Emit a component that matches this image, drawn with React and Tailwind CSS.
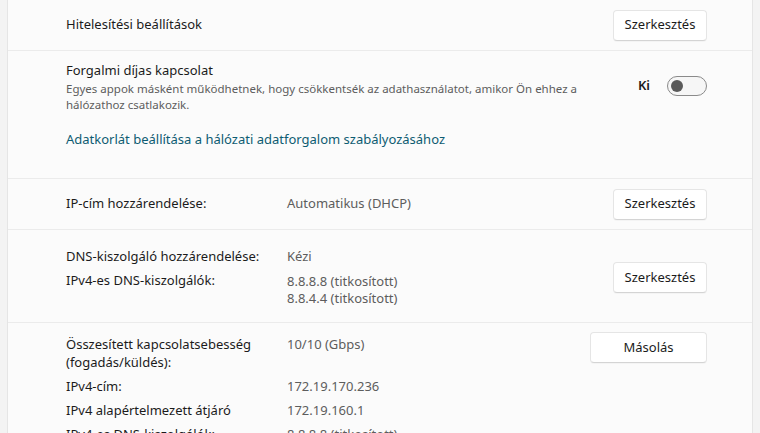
import React, { useState } from "react";

const font = { fontFamily: '"Segoe UI", "Noto Sans", sans-serif' };

const EditButton = ({ children, wide }) => (
  <button
    className={`h-[31px] ${
      wide ? "w-[117px]" : "w-[94px]"
    } shrink-0 rounded-[4px] border border-[#e5e5e5] border-b-[#d4d4d4] bg-white text-[13px] text-[#1b1b1b] shadow-[0_1px_1px_rgba(0,0,0,0.03)]`}
  >
    {children}
  </button>
);

const Toggle = ({ on, onClick }) => (
  <button
    onClick={onClick}
    className="relative h-[20px] w-[40px] rounded-full border border-[#8a8a8a] bg-[#f6f6f6]"
    aria-label="Forgalmi díjas kapcsolat"
  >
    <span
      className={`absolute top-1/2 h-[12px] w-[12px] -translate-y-1/2 rounded-full bg-[#5a5a5a] ${
        on ? "left-[23px]" : "left-[3px]"
      }`}
    />
  </button>
);

const Row = ({ children, className = "" }) => (
  <div className={`border-b border-[#ebebeb] pl-[58px] pr-[45px] ${className}`}>
    {children}
  </div>
);

export default function App() {
  const [metered, setMetered] = useState(false);

  return (
    <div
      className="h-[433px] w-[760px] overflow-hidden bg-[#f3f3f3] px-[7px]"
      style={font}
    >
      <div className="h-full border-x border-[#e5e5e5] bg-[#fbfbfb] text-[13px] text-[#1b1b1b]">
        <Row className="flex h-[51px] items-center justify-between">
          <span>Hitelesítési beállítások</span>
          <EditButton>Szerkesztés</EditButton>
        </Row>

        <Row className="h-[128px] pt-[10px]">
          <div className="flex items-center justify-between">
            <div className="flex flex-col">
              <span className="leading-[19px]">Forgalmi díjas kapcsolat</span>
              <span className="pt-[1px] text-[11.5px] leading-[16px] text-[#5d5d5d]">
                Egyes appok másként működhetnek, hogy csökkentsék az
                adathasználatot, amikor Ön ehhez a
                <br />
                hálózathoz csatlakozik.
              </span>
            </div>
            <div className="-mt-[2px] flex items-center gap-[17px]">
              <span className="text-[13px] font-semibold text-[#1b1b1b]">
                {metered ? "Be" : "Ki"}
              </span>
              <Toggle on={metered} onClick={() => setMetered(!metered)} />
            </div>
          </div>
          <div className="mt-[17px] leading-[19px] text-[#0e5c72]">
            Adatkorlát beállítása a hálózati adatforgalom szabályozásához
          </div>
        </Row>

        <Row className="flex h-[51px] items-center">
          <span className="w-[221px]">IP-cím hozzárendelése:</span>
          <span className="flex-1 text-[#5d5d5d]">Automatikus (DHCP)</span>
          <EditButton>Szerkesztés</EditButton>
        </Row>

        <Row className="flex h-[93px] items-start pt-[16px]">
          <div className="grid flex-1 grid-cols-[221px_1fr] gap-y-[4px] leading-[20px]">
            <span>DNS-kiszolgáló hozzárendelése:</span>
            <span className="text-[#5d5d5d]">Kézi</span>
            <span>IPv4-es DNS-kiszolgálók:</span>
            <span className="pt-[3px] leading-[17px] text-[#5d5d5d]">
              8.8.8.8 (titkosított)
              <br />
              8.8.4.4 (titkosított)
            </span>
          </div>
          <div className="mt-[16px]">
            <EditButton>Szerkesztés</EditButton>
          </div>
        </Row>

        <div className="flex items-start pl-[58px] pr-[45px] pt-[9px]">
          <div className="grid flex-1 grid-cols-[221px_1fr] gap-y-[6px] pt-[3px] leading-[18px]">
            <span>
              Összesített kapcsolatsebesség
              <br />
              (fogadás/küldés):
            </span>
            <span className="text-[#5d5d5d]">10/10 (Gbps)</span>
            <span>IPv4-cím:</span>
            <span className="text-[#5d5d5d]">172.19.170.236</span>
            <span>IPv4 alapértelmezett átjáró</span>
            <span className="text-[#5d5d5d]">172.19.160.1</span>
            <span>IPv4-es DNS-kiszolgálók:</span>
            <span className="text-[#5d5d5d]">8.8.8.8 (titkosított)</span>
          </div>
          <EditButton wide>Másolás</EditButton>
        </div>
      </div>
    </div>
  );
}
